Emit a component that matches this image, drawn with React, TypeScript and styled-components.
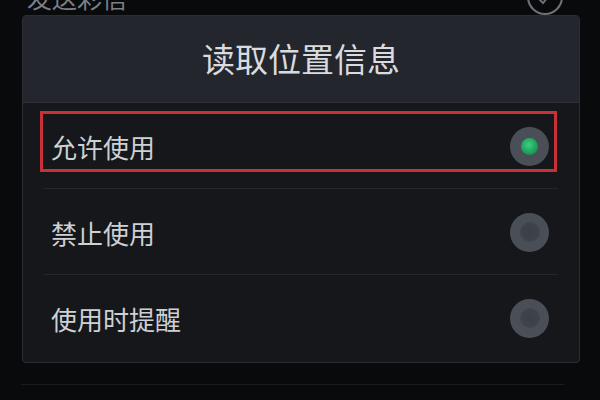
import styled, { createGlobalStyle } from 'styled-components';

const GlobalStyle = createGlobalStyle`
  html, body {
    margin: 0;
    padding: 0;
    background: #090a0c;
  }
  body {
    font-family: 'Noto Sans CJK SC', 'Noto Sans', sans-serif;
  }
`;

const Screen = styled.div`
  position: relative;
  width: 600px;
  height: 400px;
  overflow: hidden;
  background: #090a0c;
`;

const BgList = styled.div`
  display: flex;
  flex-direction: column;
  margin: -28px 36px 0 21px;
`;

const BgRow = styled.div<{ $height: number }>`
  display: flex;
  align-items: center;
  justify-content: space-between;
  height: ${(p) => p.$height}px;
  padding-left: 6px;
  border-bottom: 1px solid #1a1c20;
  color: #7b7f86;
  font-size: 25px;
`;

const Dialog = styled.div`
  position: absolute;
  left: 22px;
  top: 15px;
  width: 558px;
  height: 348px;
  display: flex;
  flex-direction: column;
  border-radius: 4px;
  border: 1px solid #2a2e34;
  box-sizing: border-box;
  overflow: hidden;
  background: #15171b;
`;

const Header = styled.div`
  height: 87px;
  display: flex;
  align-items: center;
  justify-content: center;
  padding-bottom: 3px;
  box-sizing: border-box;
  background: #23272d;
  border-bottom: 1px solid #2e3238;
  color: #d9dbde;
  font-size: 33px;
`;

const Option = styled.div<{ $last?: boolean }>`
  position: relative;
  height: 86px;
  display: flex;
  align-items: center;
  justify-content: space-between;
  padding: 0 30px 0 28px;
  box-sizing: border-box;
  color: #cdd0d4;
  font-size: 26px;

  &::after {
    content: '';
    display: ${(p) => (p.$last ? 'none' : 'block')};
    position: absolute;
    left: 21px;
    right: 21px;
    bottom: 0;
    height: 1px;
    background: #24272c;
  }
`;

const Highlight = styled.div`
  position: absolute;
  left: 17px;
  right: 22px;
  top: 8px;
  height: 61px;
  border: 3px solid #c8303a;
  box-sizing: border-box;
  pointer-events: none;
`;

const Radio = styled.div<{ $on?: boolean }>`
  width: 39px;
  height: 39px;
  border-radius: 50%;
  background: #4a4f57;
  display: flex;
  align-items: center;
  justify-content: center;

  &::before {
    content: '';
    width: ${(p) => (p.$on ? 17 : 20)}px;
    height: ${(p) => (p.$on ? 17 : 20)}px;
    border-radius: 50%;
    background: ${(p) =>
      p.$on
        ? 'radial-gradient(circle at 45% 40%, #3fcf83 0%, #1fa25c 55%, #16804a 100%)'
        : 'radial-gradient(circle, #3b3f46 0%, #3f434a 60%, #474c54 100%)'};
  }
`;

const options = [
  { label: '允许使用', on: true },
  { label: '禁止使用', on: false },
  { label: '使用时提醒', on: false },
];

export default function App() {
  return (
    <>
      <GlobalStyle />
      <Screen>
        <BgList>
          <BgRow $height={50}>
            发送彩信
            <svg width='38' height='38' viewBox='0 0 38 38'>
              <circle cx='19' cy='19' r='17' fill='none' stroke='#6c7077' strokeWidth='2' />
              <path d='M11 19 L17 25 L27 13' fill='none' stroke='#6c7077' strokeWidth='2' />
            </svg>
          </BgRow>
          <BgRow $height={361} />
        </BgList>
        <Dialog>
          <Header>读取位置信息</Header>
          {options.map((o, i) => (
            <Option key={o.label} $last={i === options.length - 1}>
              {o.on && <Highlight />}
              <span>{o.label}</span>
              <Radio $on={o.on} />
            </Option>
          ))}
        </Dialog>
      </Screen>
    </>
  );
}
